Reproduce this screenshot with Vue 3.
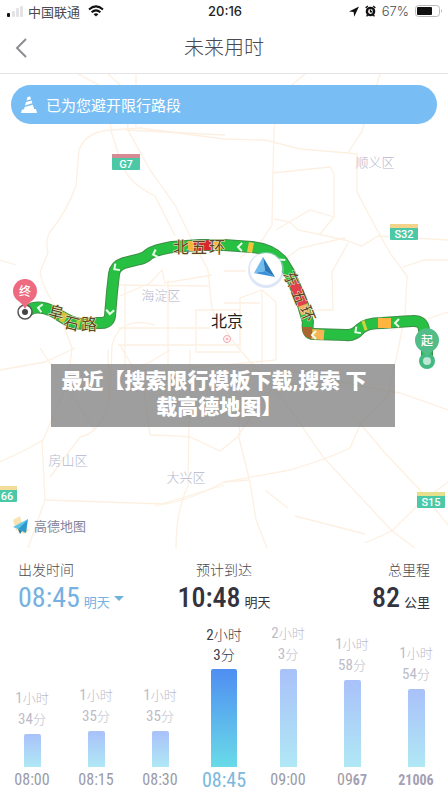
<script setup>
const trips = [
  { time: '08:00', hours: 1, minutes: 34, height: 33 },
  { time: '08:15', hours: 1, minutes: 35, height: 36 },
  { time: '08:30', hours: 1, minutes: 35, height: 36 },
  { time: '08:45', hours: 2, minutes: 3, height: 98, active: true },
  { time: '09:00', hours: 2, minutes: 3, height: 98 },
  { time: '09', tail: '67', hours: 1, minutes: 58, height: 87 },
  { time: '', tail: '21006', hours: 1, minutes: 54, height: 78 },
];

const areas = [
  { name: '顺义区', x: 375, y: 167 },
  { name: '海淀区', x: 161, y: 300 },
  { name: '房山区', x: 68, y: 465 },
  { name: '大兴区', x: 186, y: 482 },
];

const shields = [
  { name: 'G7', x: 112, y: 154, top: '#d58a94' },
  { name: 'S32', x: 390, y: 224, top: '#f3d48a' },
  { name: 'S15', x: 417, y: 492, top: '#e6e08c' },
  { name: '66', x: -11, y: 486, top: '#f3dc9a' },
];

const roadNames = [
  { text: '北', x: 181, y: 253, r: 0 },
  { text: '五', x: 199, y: 253, r: 0 },
  { text: '环', x: 217, y: 253, r: 0 },
  { text: '阜', x: 55, y: 318, r: 14 },
  { text: '石', x: 70, y: 329, r: 14 },
  { text: '路', x: 89, y: 330, r: 0 },
  { text: '东', x: 286, y: 281, r: 68 },
  { text: '五', x: 294, y: 299, r: 68 },
  { text: '环', x: 302, y: 316, r: 68 },
];

const arrows = [
  { x: 40, y: 308, r: 10 },
  { x: 110, y: 312, r: -85 },
  { x: 116, y: 268, r: -35 },
  { x: 155, y: 254, r: -18 },
  { x: 240, y: 247, r: 2 },
  { x: 281, y: 261, r: 50 },
  { x: 314, y: 335, r: 0 },
  { x: 357, y: 331, r: -35 },
  { x: 397, y: 323, r: 0 },
];

const route =
  'M25 312 L33 308 Q42 306 52 311 C62 316 70 324 82 324 L98 323 Q109 324 110 316 L112 292 L114 274 Q115 266 124 263 L140 259 Q145 258 149 254 Q155 250 172 247 L200 245 L224 245 L252 247 Q272 249 282 261 L290 274 L303 305 L308 322 Q306 334 314 334 L346 335 Q354 336 360 329 Q366 323 382 323 L412 321 Q423 320 424 330 L427 346 L427 361';
</script>

<template>
  <div class="page">
    <div class="status">
      <div class="carrier">
        <svg width="17" height="12" viewBox="0 0 17 12">
          <rect x="0" y="8" width="3" height="4" rx="1" fill="#111" />
          <rect x="5" y="6" width="3" height="6" rx="1" fill="#e3e3e6" />
          <rect x="9" y="3" width="3" height="9" rx="1" fill="#e3e3e6" />
          <rect x="13" y="1" width="3" height="11" rx="1" fill="#e3e3e6" />
        </svg>
        <span>中国联通</span>
        <svg class="wifi" width="16" height="12" viewBox="0 0 16 12" fill="none" stroke="#111" stroke-width="2">
          <path d="M1 4.5 Q8 -1.8 15 4.5" />
          <path d="M3.6 7.3 Q8 3.4 12.4 7.3" />
          <path d="M8 11.6 L5.6 9.2 Q8 7.4 10.4 9.2 Z" fill="#111" stroke="none" />
        </svg>
      </div>
      <span class="clock">20:16</span>
      <div class="power">
        <svg width="10" height="11" viewBox="0 0 10 11">
          <path d="M10 0.5 L0 5.4 L4.6 6 L5.2 10.8 Z" fill="#111" />
        </svg>
        <svg class="alarm" width="11" height="12" viewBox="0 0 11 12">
          <circle cx="5.5" cy="6.5" r="3.6" fill="none" stroke="#111" stroke-width="2.4" />
          <path d="M5.5 4.4 V6.8 H7.2 M0.7 3 L2.8 1 M8.2 1 L10.3 3 M2.6 10 L1.6 11.4 M8.4 10 L9.4 11.4" fill="none" stroke="#111" stroke-width="1.4" />
        </svg>
        <span class="percent">67%</span>
        <svg width="28" height="12" viewBox="0 0 28 12">
          <rect x="0.5" y="0.5" width="24" height="11" rx="3" fill="#fff" stroke="#bbb" />
          <rect x="2" y="2" width="15" height="8" rx="1" fill="#111" />
          <path d="M26 4 Q28 6 26 8 Z" fill="#bbb" />
        </svg>
      </div>
    </div>

    <header class="header">
      <button class="back" aria-label="返回">
        <svg width="12" height="20" viewBox="0 0 12 20" fill="none" stroke="#8c8c92" stroke-width="2">
          <path d="M11 1 L2 10 L11 19" />
        </svg>
      </button>
      <h1>未来用时</h1>
    </header>

    <section class="map">
      <svg class="canvas" viewBox="0 74 448 474">
        <g class="roads">
          <path d="M78 74 L108 90 L111 130 M108 74 L126 90 L128 130 L150 170 L175 205 L192 240 L208 270 L212 310 L236 345 L285 402 L324 458 L392 531 L415 548" />
          <path d="M305 74 L280 95 L274 130 L273 172 L272 225 L262 240 L240 258" />
          <path d="M140 128 L112 130 Q86 131 79 150 L76 185 Q68 210 50 232 Q45 240 48 253 L40 272 Q43 290 58 310 L72 348" />
          <path d="M111 131 L122 165 Q130 184 155 196 L175 236" />
          <path d="M140 128 L224 139 L265 140 L300 149 L348 153 L357 154 L357 192 L376 228 L390 253 L407 276 L405 315 L398 350 L388 395 L360 425 L350 448 Q330 458 290 470 L224 482 Q190 500 165 504 L105 502 L45 500" />
          <path d="M348 153 L362 131 L380 74 M272 173 L330 167 L334 174 L334 217 L320 234" />
          <path d="M274 219 L290 222 L298 230 L345 240 L362 246 L378 236 L448 240 M282 261 L300 248 L345 238 M348 243 L332 272 L333 310 L300 310" />
          <path d="M403 267 L424 260 L448 260 M390 331 L448 312 M0 260 L16 265" />
          <path d="M0 462 L25 450 L43 440 L68 382 L72 348 M42 440 L45 500 L28 548 M0 370 L45 362 L75 348" />
          <path d="M50 477 L80 437 Q100 433 109 402 L108 350" />
          <path d="M120 345 L143 385 L150 435 Q165 435 190 437 L220 451 L240 435 L238 410" />
          <path d="M190 350 L188 486 Q176 510 176 548 M238 434 L250 482 L256 520 L267 548" />
          <path d="M224 482 L250 480 M265 490 L288 508 M295 516 L365 534 M365 543 L392 531 L420 503 L448 482" />
          <path d="M290 370 L350 384 L400 393 L448 410 M358 421 L385 453 L420 490 L448 525" />
          <path d="M118 285 L210 286 M120 296 L150 283 L162 270 L165 283 L212 275 M118 328 L210 328 M118 345 L240 345 L240 298 L262 290 L276 302 L276 360 L190 368" />
          <path d="M125 285 V365 M168 280 V365 M262 290 V365 M196 310 H240 V352 H196 Z M224 271 H246 M224 303 H260 M155 325 Q120 315 112 345 L110 400" />
          <path d="M136 74 V127 M126 130 L225 135 M276 230 L310 210 L334 217 M40 348 L95 430" />
          <path d="M155 506 L224 485 M112 375 L150 362 L170 350 M280 378 L238 435" />
        </g>

        <text v-for="a in areas" :key="a.name" class="area" :x="a.x" :y="a.y">{{ a.name }}</text>
        <text class="city" x="227" y="327">北京</text>
        <g fill="none" stroke="#f0a0a8">
          <circle cx="227" cy="339" r="3.5" />
          <circle cx="227" cy="339" r="1" />
        </g>

        <path class="route-edge" :d="route" />
        <path class="route" :d="route" />
        <g class="jams">
          <path d="M188 246 L194 246" stroke="#f2b63c" />
          <path d="M194 246 L211 245" stroke="#d8262c" />
          <path d="M211 245 L221 245" stroke="#f2b63c" />
          <path d="M248 247 L253 248" stroke="#f2c43c" />
          <path d="M293 281 L303 305" stroke="#e23e4c" />
          <path d="M303 305 L306 314" stroke="#f5ae5c" />
          <path d="M307 327 Q307 333 312 334" stroke="#a8652f" />
          <path d="M312 334 L324 335" stroke="#f9b455" />
          <path d="M363 326 L366 325" stroke="#c8d43c" />
          <path d="M378 323 L391 323" stroke="#fdb540" />
          <path d="M61 316 L66 319" stroke="#d7c13c" />
          <path d="M76 323 L80 324" stroke="#b8cc3c" />
        </g>
        <path
          v-for="(a, i) in arrows"
          :key="i"
          class="arrow"
          d="M2 -4 L-2 0 L2 4"
          :transform="`translate(${a.x} ${a.y}) rotate(${a.r})`"
        />
        <text
          v-for="(r, i) in roadNames"
          :key="'r' + i"
          class="road-name"
          :transform="`translate(${r.x} ${r.y}) rotate(${r.r})`"
        >{{ r.text }}</text>

        <g v-for="s in shields" :key="s.name">
          <rect :x="s.x" :y="s.y" width="28" height="16" rx="1" fill="#4bc9a6" />
          <rect :x="s.x" :y="s.y" width="28" height="4" rx="1" :fill="s.top" />
          <text class="shield" :x="s.name === '66' ? 7 : s.x + 14" :y="s.y + 14">{{ s.name }}</text>
        </g>

        <circle cx="25" cy="312" r="7" fill="#fff" stroke="#555" stroke-width="1.5" />
        <circle cx="25" cy="312" r="3" fill="#444" />
        <path d="M25 309 Q22 303 17 300 A12 12 0 1 1 33 300 Q28 303 25 309 Z" fill="#ee6a80" />
        <text class="pin" x="25" y="296">终</text>
        <circle cx="427" cy="361" r="6" fill="#bfe8d4" stroke="#43ba82" stroke-width="4" />
        <path d="M427 358 Q425 353 420 350 A12 12 0 1 1 434 350 Q429 353 427 358 Z" fill="#52bd88" />
        <text class="pin" x="427" y="345">起</text>

        <circle cx="266" cy="270" r="18" fill="#b9cdf0" opacity="0.5" />
        <circle cx="266" cy="269" r="16" fill="#fff" />
        <path d="M263 257 L254 273 L265 271 Z" fill="#70bdf0" />
        <path d="M263 257 L275 277 L265 271 Z" fill="#2b78b9" />
        <path d="M254 273 L265 271 L275 277 Z" fill="#3d91d8" />

        <path d="M13 520 L20 516 L22 524 L29 530 L24 534 L16 530 Z" fill="#f8e3b4" />
        <path d="M28 519 L13 527 L18 529 Z" fill="#5fc4e8" />
        <path d="M28 519 L18 529 L26 533 Z" fill="#2a9bcf" />
        <path d="M18 529 L20 534 L22 531 Z" fill="#1c7ca9" />
        <text class="brand" x="34" y="531">高德地图</text>
      </svg>

      <div class="banner">
        <svg width="16" height="18" viewBox="0 0 16 18" fill="#fff">
          <path d="M6.5 1 L9.2 0.4 L10 3.2 L5.5 4.4 Z" />
          <path d="M5 6 L10.6 4.6 L11.3 7.2 L4 9.6 Z" />
          <path d="M3.6 11 L11.8 8.8 L13.2 13 H15 L16 17 H0 L1 13.4 H3 Z" />
        </svg>
        <span>已为您避开限行路段</span>
      </div>

      <div class="caption">最近【搜索限行模板下载,搜索 下载高德地图<span class="half">】</span></div>
    </section>

    <section class="summary">
      <div>
        <p>出发时间</p>
        <button class="value depart">
          <strong>08:45</strong><span>明天</span>
          <svg width="10" height="5" viewBox="0 0 10 5"><path d="M0 0 H10 L5 5 Z" fill="#6fb2da" /></svg>
        </button>
      </div>
      <div class="arrive">
        <p>预计到达</p>
        <div class="value"><strong>10:48</strong><span>明天</span></div>
      </div>
      <div class="distance">
        <p>总里程</p>
        <div class="value"><strong>82</strong><span>公里</span></div>
      </div>
    </section>

    <section class="chart">
      <button v-for="(t, i) in trips" :key="i" class="trip" :class="{ active: t.active }">
        <span class="duration"><b>{{ t.hours }}</b>小时<br /><b>{{ t.minutes }}</b>分</span>
        <span class="bar" :style="{ height: t.height + 'px' }"></span>
        <span class="time">{{ t.time }}<em v-if="t.tail">{{ t.tail }}</em></span>
      </button>
    </section>
  </div>
</template>

<style>
body {
  background: #fff;
}
</style>

<style scoped>
.page {
  font-family: Roboto, "Noto Sans CJK SC", sans-serif;
  color: #4a4a52;
}

button {
  border: 0;
  padding: 0;
  background: none;
  font: inherit;
  color: inherit;
}

.status {
  display: grid;
  grid-template-columns: 1fr auto 1fr;
  align-items: center;
  height: 22px;
  padding: 0 5px 0 7px;
  font-size: 13px;
}

.carrier,
.power {
  display: flex;
  align-items: center;
  gap: 4px;
}

.wifi {
  margin-left: 4px;
}

.clock {
  font-family: Inter, sans-serif;
  font-weight: 500;
  color: #222;
}

.percent {
  font-family: Inter, sans-serif;
  font-weight: 300;
}

.power {
  justify-content: flex-end;
  gap: 6px;
}

.header {
  display: grid;
  grid-template-columns: 40px 1fr 40px;
  align-items: center;
  height: 51px;
  border-bottom: 1px solid #e4e4e6;
}

.back {
  display: flex;
  padding-left: 15px;
}

h1 {
  margin: 0;
  font-size: 20px;
  line-height: 28px;
  font-weight: 300;
  text-align: center;
}

.map {
  position: relative;
}

.canvas {
  display: block;
  width: 100%;
}

.roads {
  fill: none;
  stroke: #fdf0e2;
  stroke-width: 1.3;
}

.route-edge,
.route,
.jams {
  fill: none;
  stroke-linejoin: round;
}

.route-edge {
  stroke: #3f8f48;
  stroke-width: 12;
}

.route {
  stroke: #27c043;
  stroke-width: 10;
}

.jams {
  stroke-width: 10;
}

.arrow {
  fill: none;
  stroke: #e9ffe9;
  stroke-width: 2;
}

.canvas text {
  text-anchor: middle;
}

.area {
  font-size: 13px;
  font-weight: 300;
  fill: #b4b8cc;
}

.city {
  font-size: 16px;
  fill: #222;
}

.road-name {
  font-size: 16px;
  fill: #5b4523;
  stroke: #f6f0c8;
  stroke-width: 1;
  paint-order: stroke;
}

.shield {
  font-size: 11px;
  font-weight: 500;
  fill: #fff;
}

.pin {
  font-size: 12px;
  font-weight: 500;
  fill: #fff;
}

.brand {
  font-size: 13px;
  fill: #85859a;
}

.canvas .brand {
  text-anchor: start;
}

.banner {
  position: absolute;
  top: 11px;
  left: 11px;
  right: 11px;
  display: flex;
  align-items: center;
  gap: 9px;
  height: 39px;
  padding-left: 10px;
  box-sizing: border-box;
  border-radius: 20px;
  background: #78bdf3;
  color: #fff;
  font-size: 15px;
}

.caption {
  position: absolute;
  top: 290px;
  left: 51px;
  right: 53px;
  padding: 4px 22px 7px 4px;
  background: rgba(128, 128, 128, 0.76);
  color: #fff;
  font-size: 21px;
  font-weight: 900;
  line-height: 26px;
  text-align: center;
}

.half {
  font-feature-settings: "halt";
}

.summary {
  display: grid;
  grid-template-columns: 1fr 1fr 1fr;
  padding: 11px 18px 0;
}

.summary p {
  margin: 0;
  font-size: 14px;
  line-height: 22px;
  font-weight: 300;
}

.value {
  display: flex;
  align-items: baseline;
  gap: 4px;
  height: 34px;
  font-size: 13px;
  line-height: 34px;
  color: #33333d;
}

.value strong,
.duration b,
.time {
  font-family: "Roboto Condensed", "Liberation Sans Narrow", sans-serif;
}

.value strong {
  font-size: 28px;
  font-weight: 500;
}

.value.depart {
  color: #76b1e2;
}

.depart strong {
  font-weight: 400;
}

.depart svg {
  align-self: center;
}

.arrive,
.distance {
  display: flex;
  flex-direction: column;
  align-items: center;
}

.distance {
  align-items: flex-end;
}

.chart {
  display: grid;
  grid-template-columns: repeat(7, 1fr);
  align-items: end;
  height: 176px;
}

.trip {
  display: flex;
  flex-direction: column;
  align-items: center;
  color: #bcbcc8;
}

.duration {
  margin-bottom: 4px;
  font-size: 13px;
  font-weight: 300;
  line-height: 20px;
}

.duration b {
  font-size: 15px;
  font-weight: 400;
}

.bar {
  width: 17px;
  border-radius: 2px 2px 0 0;
  background: linear-gradient(#a9c1f9, #b0e8f5);
}

.time {
  height: 24px;
  font-size: 16px;
  line-height: 26px;
  color: #9b9ba5;
}

.time em {
  font-size: 14px;
  font-style: normal;
  font-weight: 700;
  color: #a3a0b4;
}

.active .duration {
  font-size: 14px;
  color: #3c3c46;
}

.active .bar {
  width: 26px;
  background: linear-gradient(#4f8ef2, #69dbe8);
}

.active .time {
  font-size: 20px;
  color: #7ab8de;
}
</style>
